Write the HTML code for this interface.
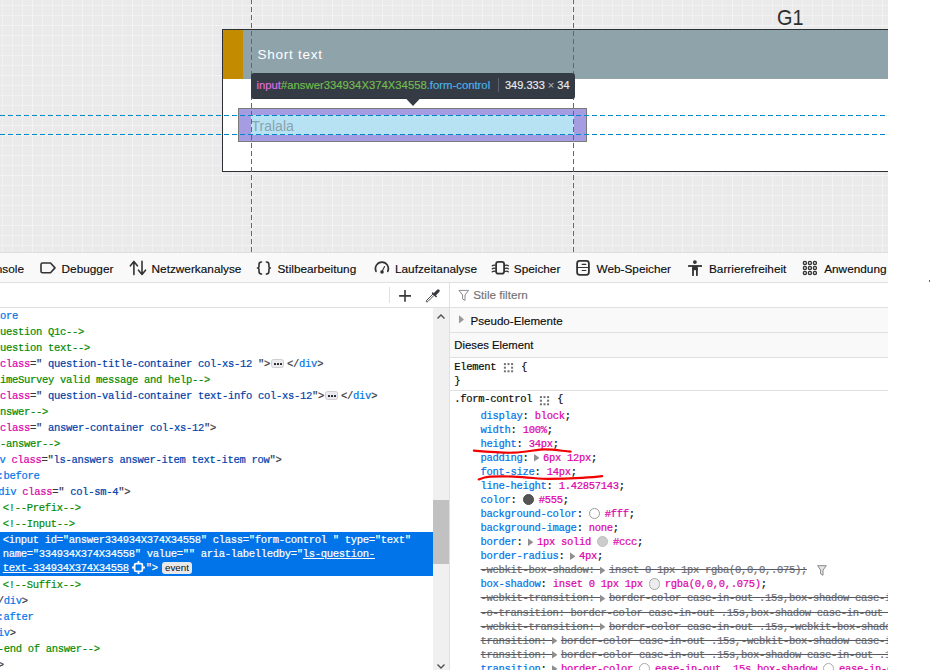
<!DOCTYPE html><html><head><meta charset="utf-8"><style>
*{margin:0;padding:0;box-sizing:border-box}
html,body{width:930px;height:670px;overflow:hidden;background:#fff;font-family:"Liberation Sans",sans-serif;position:relative}
.a{position:absolute}
.clip{position:absolute;left:0;top:0;width:930px;height:670px;overflow:hidden}
.ml{position:absolute;font-family:"Liberation Mono",monospace;font-size:10.5px;letter-spacing:-0.3px;line-height:10.5px;white-space:pre;-webkit-text-stroke:0.2px currentColor}
.sl{position:absolute;line-height:1em;white-space:pre;-webkit-text-stroke:0.15px currentColor}
.t{color:#0074e8} .n{color:#dd00a9} .v{color:#003eaa} .p{color:#38383d} .c{color:#058b00}
.rn{color:#0074e8} .rv{color:#dd00a9} .rp{color:#0c0c0d}
.st{color:#6e6e73;text-decoration:line-through;text-decoration-color:#5a5a5f}
.sel .t,.sel .n,.sel .v,.sel .p{color:#fff}
.spc{display:inline-block;height:1px}
.bdg{position:absolute;width:13.3px;height:9px;border:1px solid #cfcfd2;border-radius:2.5px;background:#ebebee}
.bdg i{position:absolute;top:2.9px;width:2px;height:2px;background:#222;border-radius:0.5px}
.sw{position:absolute;width:11.5px;height:11.5px;border-radius:50%;border:1px solid #999}
.tri{position:absolute;width:0;height:0;border-top:3.1px solid transparent;border-bottom:3.1px solid transparent;border-left:5.1px solid #8f8f8f}
.evt{position:absolute;width:29.6px;height:11.6px;background:#e9e9ec;border-radius:3px;font-size:9.8px;color:#0c0c0d;line-height:11.4px;text-align:center}
#page{background-color:#eaeaeb;
 background-image:
  linear-gradient(to right, transparent 32px, #f3f3f4 32px, #f3f3f4 33px, transparent 33px),
  linear-gradient(to bottom, transparent 25px, #f3f3f4 25px, #f3f3f4 26px, transparent 26px),
  linear-gradient(to right, transparent 2px, #f1f1f2 2px, #f1f1f2 3px, transparent 3px),
  linear-gradient(to bottom, transparent 5px, #f1f1f2 5px, #f1f1f2 6px, transparent 6px);
 background-size:50px 50px,50px 50px,10px 10px,10px 10px;}
</style></head><body>
<div id="page" class="a" style="left:0;top:0;width:888px;height:253px;overflow:hidden">
<div class="sl" style="left:777.30px;top:6.40px;font-size:22.8px;color:#2e2e2e;-webkit-text-stroke:0;transform:scaleX(0.87);transform-origin:0 0">G1</div>
<div class="a" style="left:222px;top:29px;width:700px;height:143px;border:1px solid #2c2f33;background:#fff"></div>
<div class="a" style="left:223px;top:30px;width:700px;height:48.5px;background:#8fa3ab"></div>
<div class="a" style="left:223px;top:30px;width:20px;height:48.5px;background:#c28b00;border-top-left-radius:3px"></div>
<div class="sl" style="left:257.50px;top:47.97px;font-size:13.5px;color:#fff;letter-spacing:0.75px;-webkit-text-stroke:0">Short text</div>
<div class="a" style="left:238px;top:108px;width:349px;height:34px;background:#a69ce1;border:1px solid #7a7a7a"></div>
<div class="a" style="left:251px;top:115px;width:323px;height:20px;background:#b7e2f3"></div>
<div class="sl" style="left:251.50px;top:118.95px;font-size:14px;color:#8aa3ae;-webkit-text-stroke:0">Tralala</div>
<svg class="a" style="left:0;top:0" width="888" height="253"><g stroke="#0088cc" stroke-width="1" fill="none"><line x1="0" y1="115.5" x2="888" y2="115.5" stroke-dasharray="5 3"/><line x1="0" y1="134.5" x2="888" y2="134.5" stroke-dasharray="5 3"/><line x1="251.5" y1="-1" x2="251.5" y2="253" stroke-dasharray="5 3"/><line x1="573.5" y1="-1" x2="573.5" y2="253" stroke-dasharray="5 3"/></g></svg>
<div class="a" style="left:251px;top:73px;width:324px;height:25.5px;background:#353b45;border-radius:3px;border-bottom:1px solid #2e333c"></div>
<svg class="a" style="left:0;top:0" width="888" height="253"><path d="M405.4,98 L413,106 L420.6,98 Z" fill="#353b45"/></svg>
<div class="sl" style="left:256.5px;top:79.93px;font-size:11.3px"><span style="color:#dd70e0">input</span><span style="color:#72be4c">#answer334934X374X34558</span><span style="color:#4bb4ec">.form-control</span></div>
<div class="a" style="left:498px;top:78px;width:1px;height:14px;background:#5d636c"></div>
<div class="sl" style="left:505px;top:80.19px;font-size:11px;color:#e8ebee">349.333 <span style="color:#a9b0b8">×</span> 34</div>
</div>
<div class="a" style="left:929px;top:279.5px;width:1.5px;height:2.2px;background:#f22"></div>
<div class="a" style="left:0;top:252.5px;width:888px;height:418px;background:#fff"></div>
<div class="a" style="left:0;top:252px;width:888px;height:1px;background:#dedee0"></div>
<div class="a" style="left:0;top:253px;width:888px;height:29px;background:#f9f9fa"></div>
<div class="a" style="left:0;top:282px;width:888px;height:1px;background:#e0e0e2"></div>
<div class="clip" style="width:888px">
<div class="sl" style="left:-18.70px;top:263.81px;font-size:11.8px;color:#0c0c0d;">Konsole</div>
<div class="sl" style="left:61.60px;top:263.81px;font-size:11.8px;color:#0c0c0d;">Debugger</div>
<div class="sl" style="left:151.60px;top:263.81px;font-size:11.8px;color:#0c0c0d;">Netzwerkanalyse</div>
<div class="sl" style="left:277.50px;top:263.81px;font-size:11.8px;color:#0c0c0d;">Stilbearbeitung</div>
<div class="sl" style="left:395.00px;top:263.81px;font-size:11.8px;color:#0c0c0d;">Laufzeitanalyse</div>
<div class="sl" style="left:513.80px;top:263.81px;font-size:11.8px;color:#0c0c0d;">Speicher</div>
<div class="sl" style="left:596.50px;top:263.81px;font-size:11.8px;color:#0c0c0d;">Web-Speicher</div>
<div class="sl" style="left:709.00px;top:263.81px;font-size:11.8px;color:#0c0c0d;">Barrierefreiheit</div>
<div class="sl" style="left:824.20px;top:263.81px;font-size:11.8px;color:#0c0c0d;">Anwendung</div>
</div>
<svg class="a" style="left:0;top:0" width="930" height="670"><g fill="none" stroke="#333" stroke-width="1.6" stroke-linejoin="round" stroke-linecap="round">
<path d="M42.5,263 L50.5,263 L55,267.9 L50.5,272.8 L42.5,272.8 Q41,272.8 41,271.3 L41,264.5 Q41,263 42.5,263 Z"/>
<path d="M133.9,274.6 L133.9,261.6 M130.4,265.8 L133.9,261.6 L137.4,265.8"/>
<path d="M142,261.4 L142,274.4 M138.5,270.2 L142,274.4 L145.5,270.2"/>
<path d="M261.5,262 Q259,262 259,264.5 L259,266.5 Q259,268 257.5,268 Q259,268 259,269.5 L259,271.6 Q259,274.1 261.5,274.1"/>
<path d="M266.4,262 Q268.9,262 268.9,264.5 L268.9,266.5 Q268.9,268 270.4,268 Q268.9,268 268.9,269.5 L268.9,271.6 Q268.9,274.1 266.4,274.1"/>
<path d="M376,271.4 A6.5,6.5 0 1 1 387.8,271.4"/>
<path d="M382,271.6 L384.6,266.6" stroke-width="1.1"/>
<rect x="496.1" y="261.9" width="8" height="11.8" rx="2.2" stroke-width="1.8"/>
<path d="M492.3,265.8 Q493.7,264.6 495.2,265.3 M492.3,268.8 Q493.7,267.6 495.2,268.3 M492.3,271.8 Q493.7,270.6 495.2,271.3 M508.3,265.8 Q506.9,264.6 505.4,265.3 M508.3,268.8 Q506.9,267.6 505.4,268.3 M508.3,271.8 Q506.9,270.6 505.4,271.3" stroke-width="1.3"/>
<rect x="577.1" y="260.9" width="11.8" height="13.9" rx="2.5" stroke-width="1.8"/>
<path d="M577,267.5 L589,267.5" stroke-width="1"/>
<path d="M582.2,264.4 L585.8,264.4 M582.2,270.5 L585.8,270.5" stroke-width="1.2"/>
<g stroke-width="1.35"><circle cx="804.9" cy="262.9" r="1.55"/><circle cx="809.9" cy="262.9" r="1.55"/><circle cx="814.9" cy="262.9" r="1.55"/>
<circle cx="804.9" cy="267.9" r="1.55"/><circle cx="809.9" cy="267.9" r="1.55"/><circle cx="814.9" cy="267.9" r="1.55"/>
<circle cx="804.9" cy="272.9" r="1.55"/><circle cx="809.9" cy="272.9" r="1.55"/><circle cx="814.9" cy="272.9" r="1.55"/></g>
</g>
<g fill="#333"><circle cx="382" cy="272" r="1.8"/>
<circle cx="694.9" cy="262.1" r="1.9"/>
<rect x="688.1" y="265.1" width="13.9" height="1.8"/>
<rect x="692.1" y="266" width="5.7" height="4.2"/>
<rect x="692.1" y="268" width="1.8" height="7.9"/>
<rect x="696" y="268" width="1.8" height="7.9"/>
</g></svg>
<div class="a" style="left:0;top:307px;width:888px;height:1px;background:#e0e0e2"></div>
<div class="a" style="left:389px;top:287px;width:1px;height:15.5px;background:#e0e0e2"></div>
<svg class="a" style="left:0;top:0" width="930" height="670"><g stroke="#38383d" fill="none" stroke-linecap="butt">
<path d="M399.1,295.9 L411,295.9 M405,290.1 L405,301.7" stroke-width="1.6"/>
<path d="M435.2,293.9 L438.2,290.9" stroke-width="3" stroke-linecap="round"/>
<path d="M432.2,292.6 L436.6,297" stroke-width="1.5"/>
<path d="M434.2,295.2 L428,301.4 Q427,302.4 426.4,301.8 Q425.8,301.2 426.8,300.2 L433,294" stroke-width="0.9"/>
</g></svg>
<div class="a" style="left:449px;top:283px;width:1px;height:387px;background:#e0e0e2"></div>
<div class="a" style="left:433px;top:308px;width:16px;height:362px;background:#f0f0f0"></div>
<div class="a" style="left:433px;top:500px;width:16px;height:64px;background:#c1c1c1"></div>
<svg class="a" style="left:0;top:0" width="930" height="670"><g stroke="#505050" fill="none" stroke-width="1.4">
<path d="M437.5,318.5 L441,315 L444.5,318.5"/>
<path d="M437.5,664.5 L441,668 L444.5,664.5"/>
</g></svg>
<div class="clip" style="clip-path:inset(308px 497px 0 0)">
<div class="ml" style="left:0.00px;top:311.16px;"><span class="t">ore</span></div>
<div class="ml" style="left:0.00px;top:327.06px;"><span class="c">uestion Q1c--&gt;</span></div>
<div class="ml" style="left:0.00px;top:342.96px;"><span class="c">uestion text--&gt;</span></div>
<div class="ml" style="left:0.00px;top:358.96px;"><span class="n">class</span><span class="p">="</span><span class="v"> question-title-container col-xs-12 </span><span class="p">"&gt;</span><span class="spc" style="width:17px"></span><span class="p">&lt;/</span><span class="t">div</span><span class="p">&gt;</span></div>
<div class="ml" style="left:0.00px;top:374.96px;"><span class="c">imeSurvey valid message and help--&gt;</span></div>
<div class="ml" style="left:0.00px;top:390.96px;"><span class="n">class</span><span class="p">="</span><span class="v"> question-valid-container text-info col-xs-12</span><span class="p">"&gt;</span><span class="spc" style="width:17px"></span><span class="p">&lt;/</span><span class="t">div</span><span class="p">&gt;</span></div>
<div class="ml" style="left:0.00px;top:406.96px;"><span class="c">nswer--&gt;</span></div>
<div class="ml" style="left:0.00px;top:422.96px;"><span class="n">class</span><span class="p">="</span><span class="v"> answer-container col-xs-12</span><span class="p">"&gt;</span></div>
<div class="ml" style="left:0.00px;top:438.96px;"><span class="c">-answer--&gt;</span></div>
<div class="ml" style="left:-0.50px;top:454.96px;"><span class="t">v</span> <span class="n">class</span><span class="p">="</span><span class="v">ls-answers answer-item text-item row</span><span class="p">"&gt;</span></div>
<div class="ml" style="left:-2.50px;top:470.96px;"><span class="t">:before</span></div>
<div class="ml" style="left:-1.80px;top:486.96px;"><span class="t">div</span> <span class="n">class</span><span class="p">="</span><span class="v"> col-sm-4</span><span class="p">"&gt;</span></div>
<div class="ml" style="left:2.80px;top:502.76px;"><span class="c">&lt;!--Prefix--&gt;</span></div>
<div class="ml" style="left:2.80px;top:518.66px;"><span class="c">&lt;!--Input--&gt;</span></div>
<div class="ml" style="left:2.80px;top:579.86px;"><span class="c">&lt;!--Suffix--&gt;</span></div>
<div class="ml" style="left:-2.20px;top:595.76px;"><span class="p">/</span><span class="t">div</span><span class="p">&gt;</span></div>
<div class="ml" style="left:-2.50px;top:611.76px;"><span class="t">:after</span></div>
<div class="ml" style="left:-2.20px;top:627.76px;"><span class="t">iv</span><span class="p">&gt;</span></div>
<div class="ml" style="left:-2.20px;top:643.76px;"><span class="c">-end of answer--&gt;</span></div>
<div class="ml" style="left:-2.20px;top:659.76px;"><span class="p">&gt;</span></div>
<div class="bdg" style="left:271.10px;top:359.40px"><i style="left:2.2px"></i><i style="left:5.2px"></i><i style="left:8.2px"></i></div>
<div class="bdg" style="left:325.10px;top:391.40px"><i style="left:2.2px"></i><i style="left:5.2px"></i><i style="left:8.2px"></i></div>
<div class="a" style="left:0;top:532.4px;width:433px;height:43.6px;background:#0074e8"></div>
<div class="ml" style="left:2.80px;top:534.96px;color:#fff">&lt;input id="answer334934X374X34558" class="form-control " type="text"</div>
<div class="ml" style="left:2.80px;top:548.76px;color:#fff">name="334934X374X34558" value="" aria-labelledby="<u>ls-question-</u></div>
<div class="ml" style="left:2.80px;top:562.56px;color:#fff"><u>text-334934X374X34558</u><span class="spc" style="width:17px"></span>"&gt;</div>
<svg class="a" style="left:0;top:0" width="930" height="670"><g stroke="#fff" fill="none" stroke-width="1.8"><rect x="134.6" y="563.6" width="7.8" height="7.8" rx="1.5"/><path d="M138.5,561 L138.5,563.6 M138.5,571.4 L138.5,574 M132,567.5 L134.6,567.5 M142.4,567.5 L145,567.5"/></g></svg>
<div class="evt" style="left:162.2px;top:562.2px">event</div>
</div>
<div class="clip" style="clip-path:inset(283px 42px 0 450px)">
<div class="a" style="left:450px;top:307.5px;width:438px;height:25px;background:#f9f9fa;border-bottom:1px solid #e0e0e2"></div>
<div class="a" style="left:450px;top:332.5px;width:438px;height:25px;background:#f9f9fa;border-bottom:1px solid #e0e0e2"></div>
<div class="a" style="left:450px;top:390px;width:438px;height:1px;background:#e0e0e2"></div>
<div class="sl" style="left:473.30px;top:289.09px;font-size:11.7px;color:#737373;">Stile filtern</div>
<div class="sl" style="left:470.50px;top:315.18px;font-size:11.6px;color:#0c0c0d;">Pseudo-Elemente</div>
<div class="sl" style="left:454.30px;top:340.03px;font-size:11.3px;color:#0c0c0d;">Dieses Element</div>
<svg class="a" style="left:0;top:0" width="930" height="670">
<path d="M459,290.4 L468.6,290.4 L465,295 L465,300.4 L462.6,299 L462.6,295 Z" fill="none" stroke="#8a8a8f" stroke-width="1" stroke-linejoin="round"/>
<path d="M459,315.3 L463.5,318.9 Q464.2,319.45 463.5,320 L459,323.6 Z" fill="#999"/>
</svg>
<div class="ml" style="left:454.20px;top:361.76px;"><span class="rp">Element <span class="spc" style="width:13px"></span> {</span></div>
<svg class="a" style="left:0;top:0" width="930" height="670"><g fill="#707073"><rect x="503.90" y="363.10" width="2" height="2"/><rect x="507.50" y="363.10" width="2" height="2"/><rect x="511.10" y="363.10" width="2" height="2"/><rect x="503.90" y="366.70" width="2" height="2"/><rect x="511.10" y="366.70" width="2" height="2"/><rect x="503.90" y="370.30" width="2" height="2"/><rect x="507.50" y="370.30" width="2" height="2"/><rect x="511.10" y="370.30" width="2" height="2"/></g></svg>
<div class="ml" style="left:454.20px;top:375.86px;"><span class="rp">}</span></div>
<div class="ml" style="left:454.20px;top:393.96px;"><span class="rp">.form-control <span class="spc" style="width:13px"></span> {</span></div>
<svg class="a" style="left:0;top:0" width="930" height="670"><g fill="#707073"><rect x="539.90" y="396.10" width="2" height="2"/><rect x="543.50" y="396.10" width="2" height="2"/><rect x="547.10" y="396.10" width="2" height="2"/><rect x="539.90" y="399.70" width="2" height="2"/><rect x="547.10" y="399.70" width="2" height="2"/><rect x="539.90" y="403.30" width="2" height="2"/><rect x="543.50" y="403.30" width="2" height="2"/><rect x="547.10" y="403.30" width="2" height="2"/></g></svg>
<div class="ml" style="left:480.60px;top:410.56px;"><span class="rn">display</span><span class="rp">: </span><span class="rv">block</span><span class="rp">;</span></div>
<div class="ml" style="left:480.60px;top:424.63px;"><span class="rn">width</span><span class="rp">: </span><span class="rv">100%</span><span class="rp">;</span></div>
<div class="ml" style="left:480.60px;top:438.70px;"><span class="rn">height</span><span class="rp">: </span><span class="rv">34px</span><span class="rp">;</span></div>
<div class="ml" style="left:480.60px;top:452.77px;"><span class="rn">padding</span><span class="rp">: </span><span class="rv"><span class="spc" style="width:8.3px"></span>6px 12px</span><span class="rp">;</span></div>
<div class="ml" style="left:480.60px;top:466.84px;"><span class="rn">font-size</span><span class="rp">: </span><span class="rv">14px</span><span class="rp">;</span></div>
<div class="ml" style="left:480.60px;top:480.91px;"><span class="rn">line-height</span><span class="rp">: </span><span class="rv">1.42857143</span><span class="rp">;</span></div>
<div class="ml" style="left:480.60px;top:494.98px;"><span class="rn">color</span><span class="rp">: </span><span class="rv"><span class="spc" style="width:16px"></span>#555</span><span class="rp">;</span></div>
<div class="ml" style="left:480.60px;top:509.05px;"><span class="rn">background-color</span><span class="rp">: </span><span class="rv"><span class="spc" style="width:16px"></span>#fff</span><span class="rp">;</span></div>
<div class="ml" style="left:480.60px;top:523.12px;"><span class="rn">background-image</span><span class="rp">: </span><span class="rv">none</span><span class="rp">;</span></div>
<div class="ml" style="left:480.60px;top:537.19px;"><span class="rn">border</span><span class="rp">: </span><span class="rv"><span class="spc" style="width:8.3px"></span>1px solid <span class="spc" style="width:16px"></span>#ccc</span><span class="rp">;</span></div>
<div class="ml" style="left:480.60px;top:551.26px;"><span class="rn">border-radius</span><span class="rp">: </span><span class="rv"><span class="spc" style="width:8.3px"></span>4px</span><span class="rp">;</span></div>
<div class="ml" style="left:480.60px;top:565.33px;"><span class="st">-webkit-box-shadow: <span class="spc" style="width:8.3px"></span>inset 0 1px 1px rgba(0,0,0,.075);</span></div>
<div class="ml" style="left:480.60px;top:579.40px;"><span class="rn">box-shadow</span><span class="rp">: </span><span class="rv">inset 0 1px 1px <span class="spc" style="width:16px"></span>rgba(0,0,0,.075)</span><span class="rp">;</span></div>
<div class="ml" style="left:480.60px;top:593.47px;"><span class="st">-webkit-transition: <span class="spc" style="width:8.3px"></span>border-color ease-in-out .15s,box-shadow ease-in-out .15s;</span></div>
<div class="ml" style="left:480.60px;top:607.54px;"><span class="st">-o-transition: border-color ease-in-out .15s,box-shadow ease-in-out .15s;</span></div>
<div class="ml" style="left:480.60px;top:621.61px;"><span class="st">-webkit-transition: <span class="spc" style="width:8.3px"></span>border-color ease-in-out .15s,-webkit-box-shadow ease-in-out .15s;</span></div>
<div class="ml" style="left:480.60px;top:635.68px;"><span class="st">transition: <span class="spc" style="width:8.3px"></span>border-color ease-in-out .15s,-webkit-box-shadow ease-in-out .15s;</span></div>
<div class="ml" style="left:480.60px;top:649.75px;"><span class="st">transition: <span class="spc" style="width:8.3px"></span>border-color ease-in-out .15s,box-shadow ease-in-out .15s;</span></div>
<div class="ml" style="left:480.60px;top:663.82px;"><span class="rn">transition</span><span class="rp">: </span><span class="rv"><span class="spc" style="width:8.3px"></span>border-color <span class="spc" style="width:16px"></span>ease-in-out .15s,box-shadow <span class="spc" style="width:16px"></span>ease-in-out .15s</span><span class="rp">;</span></div>
<svg class="a" style="left:0;top:0" width="930" height="670"><path d="M534.00,454.11 L538.70,457.31 Q539.40,457.86 538.70,458.41 L534.00,461.61 Z" fill="#8f8f8f"/></svg>
<div class="sw" style="left:522.50px;top:493.72px;background:#555;border-color:#4a4a4a"></div>
<div class="sw" style="left:588.50px;top:507.79px;background:#fff;border-color:#9a9a9a"></div>
<svg class="a" style="left:0;top:0" width="930" height="670"><path d="M528.00,538.53 L532.70,541.73 Q533.40,542.28 532.70,542.83 L528.00,546.03 Z" fill="#8f8f8f"/></svg>
<div class="sw" style="left:596.80px;top:535.93px;background:#ccc;border-color:#bdbdbd"></div>
<svg class="a" style="left:0;top:0" width="930" height="670"><path d="M570.00,552.60 L574.70,555.80 Q575.40,556.35 574.70,556.90 L570.00,560.10 Z" fill="#8f8f8f"/></svg>
<svg class="a" style="left:0;top:0" width="930" height="670"><path d="M600.00,566.67 L604.70,569.87 Q605.40,570.42 604.70,570.97 L600.00,574.17 Z" fill="#8f8f8f"/></svg>
<svg class="a" style="left:0;top:0" width="930" height="670"><path d="M817.6,565.7 L826.3,565.7 L823,570 L823,575.3 L820.6,573.8 L820.6,570 Z" fill="#e6e6e8" stroke="#8a8a8f" stroke-width="1" stroke-linejoin="round"/></svg>
<div class="sw" style="left:648.50px;top:578.14px;background:#ededed;border-color:#a8a8a8"></div>
<svg class="a" style="left:0;top:0" width="930" height="670"><path d="M600.00,594.81 L604.70,598.01 Q605.40,598.56 604.70,599.11 L600.00,602.31 Z" fill="#8f8f8f"/></svg>
<svg class="a" style="left:0;top:0" width="930" height="670"><path d="M600.00,622.95 L604.70,626.15 Q605.40,626.70 604.70,627.25 L600.00,630.45 Z" fill="#8f8f8f"/></svg>
<svg class="a" style="left:0;top:0" width="930" height="670"><path d="M552.00,637.02 L556.70,640.22 Q557.40,640.77 556.70,641.32 L552.00,644.52 Z" fill="#8f8f8f"/></svg>
<svg class="a" style="left:0;top:0" width="930" height="670"><path d="M552.00,651.09 L556.70,654.29 Q557.40,654.84 556.70,655.39 L552.00,658.59 Z" fill="#8f8f8f"/></svg>
<svg class="a" style="left:0;top:0" width="930" height="670"><path d="M552.00,665.16 L556.70,668.36 Q557.40,668.91 556.70,669.46 L552.00,672.66 Z" fill="#8f8f8f"/></svg>
<div class="sw" style="left:638.90px;top:662.56px;background:#fff;border-color:#aaa"></div>
<div class="sw" style="left:822.90px;top:662.56px;background:#fff;border-color:#aaa"></div>
</div>
<svg class="a" style="left:0;top:0" width="930" height="670"><g fill="none" stroke="#f20000" stroke-width="2.2" stroke-linecap="round">
<path d="M473.9,450.6 C489,451.9 505,453 513.4,452.7 C525,452.2 533,450.2 540,449.6 C552,448.8 562,451 570.6,451.6"/>
<path d="M478.7,479.4 C482,478 485,476.9 490,476.6 C500,476.3 508,476.4 513.4,476.6 C530,477.5 540,478.8 548,478.9 C565,478.9 575,478.3 582,477.9 C592,477.2 598,476.6 602.1,476.1"/>
</g></svg>
</body></html>
